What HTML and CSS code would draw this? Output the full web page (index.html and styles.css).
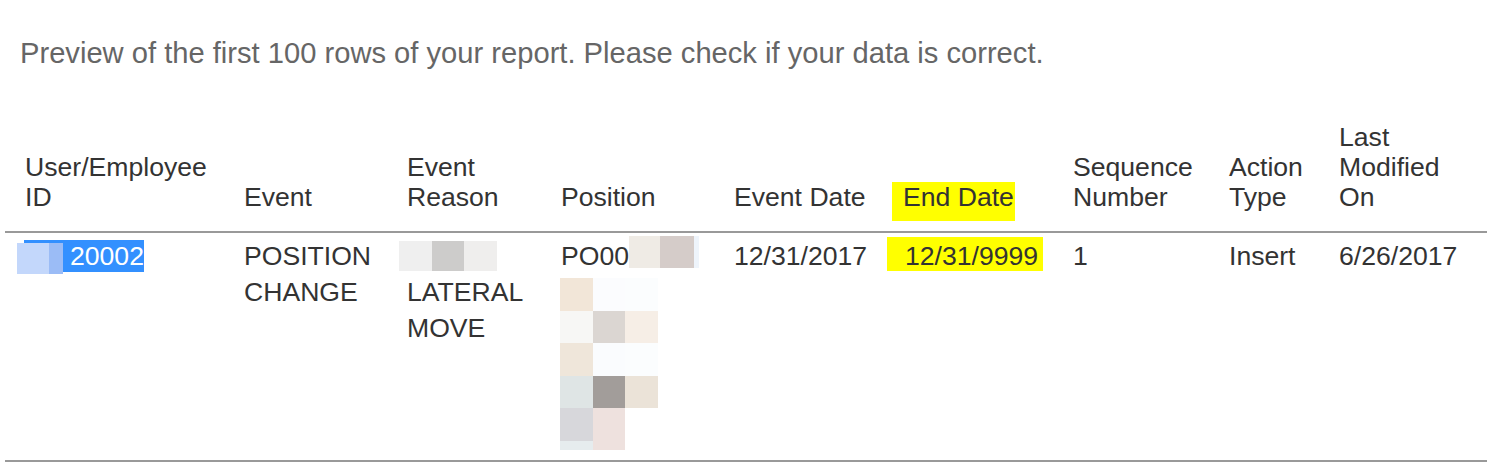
FILE: index.html
```html
<!DOCTYPE html>
<html>
<head>
<meta charset="utf-8">
<link rel="stylesheet" href="styles.css">
</head>
<body>
<div class="page">
  <p class="intro">Preview of the first 100 rows of your report. Please check if your data is correct.</p>
  <table class="report">
    <colgroup>
      <col class="c1"><col class="c2"><col class="c3"><col class="c4"><col class="c5"><col class="c6"><col class="c7"><col class="c8"><col class="c9">
    </colgroup>
    <thead>
      <tr>
        <th>User/Employee<br>ID</th>
        <th>Event</th>
        <th>Event<br>Reason</th>
        <th>Position</th>
        <th>Event Date</th>
        <th class="end"><span class="hl-head">End Date</span></th>
        <th>Sequence<br>Number</th>
        <th>Action<br>Type</th>
        <th>Last<br>Modified<br>On</th>
      </tr>
    </thead>
    <tbody>
      <tr>
        <td class="idcell">
          <span class="sel">20002</span>
          <span class="blur-id"><i class="b1"></i><i class="b2"></i></span>
        </td>
        <td>POSITION<br>CHANGE</td>
        <td>
          <div class="reason-blur"><i class="r1"></i><i class="r2"></i><i class="r3"></i></div>
          LATERAL<br>MOVE
        </td>
        <td>
          <div class="posline">PO00<span class="pos-tail"><i class="t1"></i><i class="t2"></i><i class="t3"></i></span></div>
          <div class="pixgrid">
            <i class="p11"></i><i class="p12"></i><i class="p13"></i>
            <i class="p21"></i><i class="p22"></i><i class="p23"></i>
            <i class="p31"></i><i class="p32"></i><i class="p33"></i>
            <i class="p41"></i><i class="p42"></i><i class="p43"></i>
            <i class="p51"></i><i class="p52"></i><i class="p53"></i>
          </div>
          <div class="pixfoot"><i class="f1"></i><i class="f2"></i></div>
        </td>
        <td>12/31/2017</td>
        <td class="end"><span class="hl-cell">12/31/9999</span></td>
        <td>1</td>
        <td>Insert</td>
        <td>6/26/2017</td>
      </tr>
    </tbody>
  </table>
</div>
</body>
</html>
```

FILE: styles.css
```css
html, body {
  margin: 0;
  padding: 0;
  background: #ffffff;
}

.page {
  font-family: "Liberation Sans", Arial, sans-serif;
  padding: 38px 0 0 5px;
}

.intro {
  margin: 0 0 54px 15px;
  font-size: 29.15px;
  line-height: 30px;
  color: #666666;
}

.report {
  border-collapse: collapse;
  table-layout: fixed;
  width: 1482px;
  font-size: 26.6px;
  color: #333333;
}

.c1 { width: 219px; }
.c2 { width: 163px; }
.c3 { width: 154px; }
.c4 { width: 173px; }
.c5 { width: 157px; }
.c6 { width: 182px; }
.c7 { width: 156px; }
.c8 { width: 110px; }
.c9 { width: 168px; }

.report th {
  font-weight: normal;
  text-align: left;
  vertical-align: bottom;
  line-height: 30px;
  padding: 0 0 19px 20px;
}

.report thead tr {
  border-bottom: 2px solid #999999;
}

.report tbody tr {
  border-bottom: 2px solid #999999;
}

.report td {
  vertical-align: top;
  line-height: 36px;
  padding: 5px 0 10px 20px;
  white-space: nowrap;
}

.report th.end,
.report td.end {
  padding-left: 16px;
}

.hl-head {
  background: #ffff00;
  margin-left: 5px;
  padding: 0 1px 9px 11px;
}

.hl-cell {
  background: #ffff00;
  padding: 4px 5px 0 18px;
}

/* selected id */
.idcell {
  position: relative;
}

.sel {
  background: #3390ff;
  color: #ffffff;
  padding: 1px 0 1px 46px;
  margin-left: -1px;
}

.blur-id {
  position: absolute;
  left: 12px;
  top: 10px;
  display: flex;
}

.blur-id i {
  display: block;
  height: 31px;
}

.blur-id .b1 { width: 32px; background: #c3d7fb; }
.blur-id .b2 { width: 14px; background: #9bbcf6; }

/* event reason blur */
.reason-blur {
  display: flex;
  height: 36px;
  align-items: center;
  margin-left: -8px;
}

.reason-blur i {
  display: block;
  width: 32.5px;
  height: 30px;
}

.r1 { background: #efefef; }
.r2 { background: #cdcccb; }
.r3 { background: #efeeed; }

/* position blur */
.posline {
  display: flex;
  align-items: center;
  height: 36px;
}

.pos-tail {
  display: flex;
  margin-top: -9px;
}

.pos-tail i {
  display: block;
  height: 32px;
}

.t1 { width: 31px; background: #efebe5; }
.t2 { width: 34px; background: #d5ccc9; }
.t3 { width: 5px; background: #eef4fb; }

.pixgrid {
  display: grid;
  grid-template-columns: repeat(3, 32.5px);
  grid-auto-rows: 32.5px;
  margin-top: 4px;
  margin-left: -1px;
}

.pixgrid i {
  display: block;
}

.p11 { background: #f2e6d8; }
.p12 { background: #fbfcfe; }
.p13 { background: #fbfdfe; }
.p21 { background: #f7f7f5; }
.p22 { background: #dbd6d2; }
.p23 { background: #f6eee6; }
.p31 { background: #efe6da; }
.p32 { background: #fafcfe; }
.p33 { background: #fbfdfe; }
.p41 { background: #dfe5e5; }
.p42 { background: #a29d9a; }
.p43 { background: #ebe3d8; }
.p51 { background: #d7d7db; }
.p52 { background: #eee1de; }
.p53 { background: transparent; }

.pixfoot {
  display: grid;
  grid-template-columns: repeat(2, 32.5px);
  height: 9px;
  margin-left: -1px;
}

.pixfoot i { display: block; }
.f1 { background: #e6ecee; }
.f2 { background: #eee1de; }
```
